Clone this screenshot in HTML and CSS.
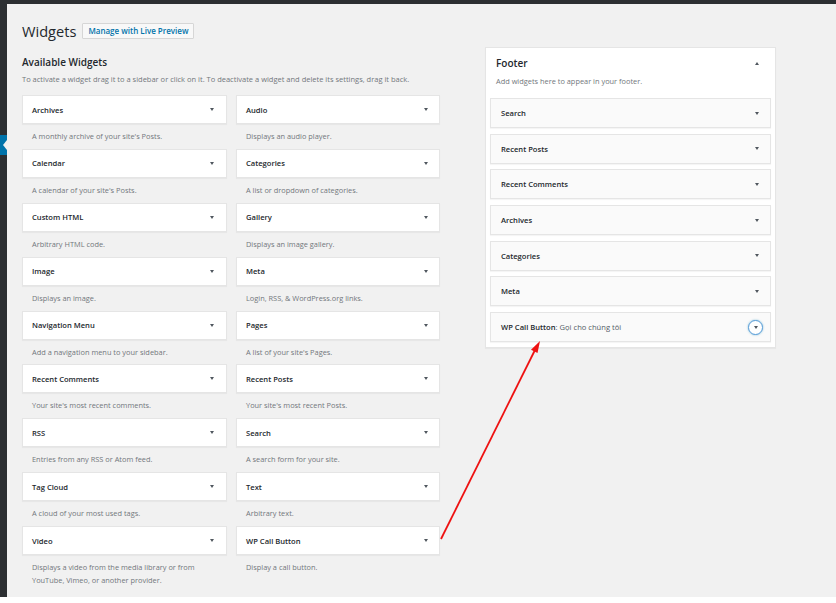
FILE: index.html
```html
<!DOCTYPE html>
<html lang="en">
<head>
    <meta charset="UTF-8">
    <title>Widgets</title>
    <link rel="stylesheet" href="styles.css">
</head>
<body>
    <div class="screen">
        <div class="wrap">
            <div class="page-head">
                <h1>Widgets</h1>
                <a class="page-action" href="#">Manage with Live Preview</a>
            </div>
            <div class="columns">
                <div class="available">
                    <h2>Available Widgets</h2>
                    <p class="intro">To activate a widget drag it to a sidebar or click on it. To deactivate a widget and delete its settings, drag it back.</p>
                    <div class="widget-grid">
                        <div class="widget"><div class="widget-top"><span>Archives</span><i class="toggle"></i></div><p class="widget-desc">A monthly archive of your site's Posts.</p></div>
                        <div class="widget"><div class="widget-top"><span>Audio</span><i class="toggle"></i></div><p class="widget-desc">Displays an audio player.</p></div>
                        <div class="widget"><div class="widget-top"><span>Calendar</span><i class="toggle"></i></div><p class="widget-desc">A calendar of your site's Posts.</p></div>
                        <div class="widget"><div class="widget-top"><span>Categories</span><i class="toggle"></i></div><p class="widget-desc">A list or dropdown of categories.</p></div>
                        <div class="widget"><div class="widget-top"><span>Custom HTML</span><i class="toggle"></i></div><p class="widget-desc">Arbitrary HTML code.</p></div>
                        <div class="widget"><div class="widget-top"><span>Gallery</span><i class="toggle"></i></div><p class="widget-desc">Displays an image gallery.</p></div>
                        <div class="widget"><div class="widget-top"><span>Image</span><i class="toggle"></i></div><p class="widget-desc">Displays an image.</p></div>
                        <div class="widget"><div class="widget-top"><span>Meta</span><i class="toggle"></i></div><p class="widget-desc">Login, RSS, &amp; WordPress.org links.</p></div>
                        <div class="widget"><div class="widget-top"><span>Navigation Menu</span><i class="toggle"></i></div><p class="widget-desc">Add a navigation menu to your sidebar.</p></div>
                        <div class="widget"><div class="widget-top"><span>Pages</span><i class="toggle"></i></div><p class="widget-desc">A list of your site's Pages.</p></div>
                        <div class="widget"><div class="widget-top"><span>Recent Comments</span><i class="toggle"></i></div><p class="widget-desc">Your site's most recent comments.</p></div>
                        <div class="widget"><div class="widget-top"><span>Recent Posts</span><i class="toggle"></i></div><p class="widget-desc">Your site's most recent Posts.</p></div>
                        <div class="widget"><div class="widget-top"><span>RSS</span><i class="toggle"></i></div><p class="widget-desc">Entries from any RSS or Atom feed.</p></div>
                        <div class="widget"><div class="widget-top"><span>Search</span><i class="toggle"></i></div><p class="widget-desc">A search form for your site.</p></div>
                        <div class="widget"><div class="widget-top"><span>Tag Cloud</span><i class="toggle"></i></div><p class="widget-desc">A cloud of your most used tags.</p></div>
                        <div class="widget"><div class="widget-top"><span>Text</span><i class="toggle"></i></div><p class="widget-desc">Arbitrary text.</p></div>
                        <div class="widget"><div class="widget-top"><span>Video</span><i class="toggle"></i></div><p class="widget-desc">Displays a video from the media library or from YouTube, Vimeo, or another provider.</p></div>
                        <div class="widget"><div class="widget-top"><span>WP Call Button</span><i class="toggle"></i></div><p class="widget-desc">Display a call button.</p></div>
                    </div>
                </div>
                <div class="sidebar">
                    <div class="sidebar-head">
                        <h2>Footer</h2>
                        <i class="toggle up"></i>
                    </div>
                    <p class="sidebar-desc">Add widgets here to appear in your footer.</p>
                    <div class="sidebar-widgets">
                        <div class="sidebar-widget"><span>Search</span><i class="toggle"></i></div>
                        <div class="sidebar-widget"><span>Recent Posts</span><i class="toggle"></i></div>
                        <div class="sidebar-widget"><span>Recent Comments</span><i class="toggle"></i></div>
                        <div class="sidebar-widget"><span>Archives</span><i class="toggle"></i></div>
                        <div class="sidebar-widget"><span>Categories</span><i class="toggle"></i></div>
                        <div class="sidebar-widget"><span>Meta</span><i class="toggle"></i></div>
                        <div class="sidebar-widget"><span>WP Call Button<span class="in-title">: Gọi cho chúng tôi</span></span><i class="toggle-ring"><i class="toggle"></i></i></div>
                    </div>
                </div>
            </div>
        </div>
    </div>
    <div class="menu-pointer"></div>
    <!-- red annotation arrow from the available widget to the footer sidebar -->
    <svg class="annotation" width="836" height="603" viewBox="0 0 836 603">
        <line x1="441" y1="539" x2="535" y2="350" stroke="#ee1111" stroke-width="1.8"/>
        <polygon points="540,341 537.5,353 531,349.8" fill="#ee1111"/>
    </svg>
</body>
</html>
```

FILE: styles.css
```css
body {
    margin: 0;
    background-color: #fff;
    font-family: "Open Sans", "Noto Sans", Arial, sans-serif;
    color: #23282d;
    position: relative;
    width: 836px;
    height: 603px;
    overflow: hidden;
}
.screen {
    height: 593px;
    background-color: #f1f1f1;
    border-top: 4px solid #2c2f32;
    border-left: 7px solid #2c2f32;
}
.wrap {
    padding-left: 15px;
}
.page-head {
    display: flex;
    align-items: center;
    gap: 6px;
    padding-top: 18px;
}
h1 {
    margin: 0;
    font-size: 14.6px;
    font-weight: 400;
    line-height: 16px;
    padding-top: 1px;
    color: #23282d;
}
.page-action {
    display: block;
    height: 14px;
    line-height: 14px;
    padding: 0 5px;
    border: 1px solid #d6d6d6;
    background-color: #f8f8f8;
    border-radius: 1px;
    color: #0073aa;
    font-size: 8px;
    font-weight: 600;
    text-decoration: none;
}
.columns {
    display: flex;
    align-items: flex-start;
    margin-top: 8px;
}
.available {
    width: 418px;
}
.available h2 {
    margin: 8px 0 0;
    font-size: 10px;
    font-weight: 600;
    line-height: 14px;
}
.intro {
    margin: 4px 0 0;
    font-size: 7.5px;
    line-height: 12px;
    color: #72777c;
}
.widget-grid {
    display: grid;
    grid-template-columns: 205px 204px;
    column-gap: 9px;
    margin-top: 10px;
}
.widget {
    min-height: 53.9px;
}
.widget-top {
    display: flex;
    align-items: center;
    justify-content: space-between;
    height: 27px;
    padding: 0 12px 0 9px;
    background-color: #fff;
    border: 1px solid #e5e5e5;
    box-shadow: 0 1px 1px rgba(0, 0, 0, 0.04);
    font-size: 7.6px;
    font-weight: 600;
}
.widget-grid .widget:nth-child(even) .widget-top {
    padding-right: 11px;
}
.widget-desc {
    margin: 0;
    padding: 6px 10px 0;
    font-size: 7.4px;
    line-height: 13px;
    color: #72777c;
}
.toggle {
    display: block;
    width: 0;
    height: 0;
    border-left: 2.5px solid transparent;
    border-right: 2.5px solid transparent;
    border-top: 3px solid #50575e;
}
.toggle.up {
    border-top: none;
    border-bottom: 3px solid #50575e;
}
.sidebar {
    width: 281px;
    margin-left: 45px;
    padding: 8px 4px 5px;
    background-color: #fff;
    border: 1px solid #e5e5e5;
    box-shadow: 0 1px 1px rgba(0, 0, 0, 0.04);
}
.sidebar-head {
    display: flex;
    align-items: center;
    justify-content: space-between;
    padding: 0 12px 0 6px;
}
.sidebar-head h2 {
    margin: 0;
    font-size: 10px;
    font-weight: 600;
    line-height: 14px;
}
.sidebar-desc {
    margin: 5px 0 0;
    padding-left: 6px;
    font-size: 7.4px;
    line-height: 12px;
    color: #72777c;
}
.sidebar-widgets {
    display: flex;
    flex-direction: column;
    gap: 5.7px;
    margin-top: 11px;
}
.sidebar-widget {
    display: flex;
    align-items: center;
    justify-content: space-between;
    height: 28px;
    padding: 0 11px 0 10px;
    background-color: #fafafa;
    border: 1px solid #e5e5e5;
    box-shadow: 0 1px 1px rgba(0, 0, 0, 0.04);
    font-size: 7.6px;
    font-weight: 600;
}
.in-title {
    font-weight: 400;
    color: #555d66;
}
.toggle-ring {
    display: flex;
    align-items: center;
    justify-content: center;
    width: 13px;
    height: 13px;
    margin-right: -4px;
    border: 1px solid #5b9dd9;
    border-radius: 50%;
    background-color: #fff;
    box-shadow: 0 0 2px rgba(30, 140, 190, 0.6);
}
.menu-pointer {
    position: absolute;
    left: 0;
    top: 135px;
    width: 7px;
    height: 20px;
    background-color: #0073aa;
}
.menu-pointer::after {
    content: "";
    position: absolute;
    right: 0;
    top: 5px;
    border-top: 5px solid transparent;
    border-bottom: 5px solid transparent;
    border-right: 4px solid #f1f1f1;
}
.annotation {
    position: absolute;
    left: 0;
    top: 0;
}
```
